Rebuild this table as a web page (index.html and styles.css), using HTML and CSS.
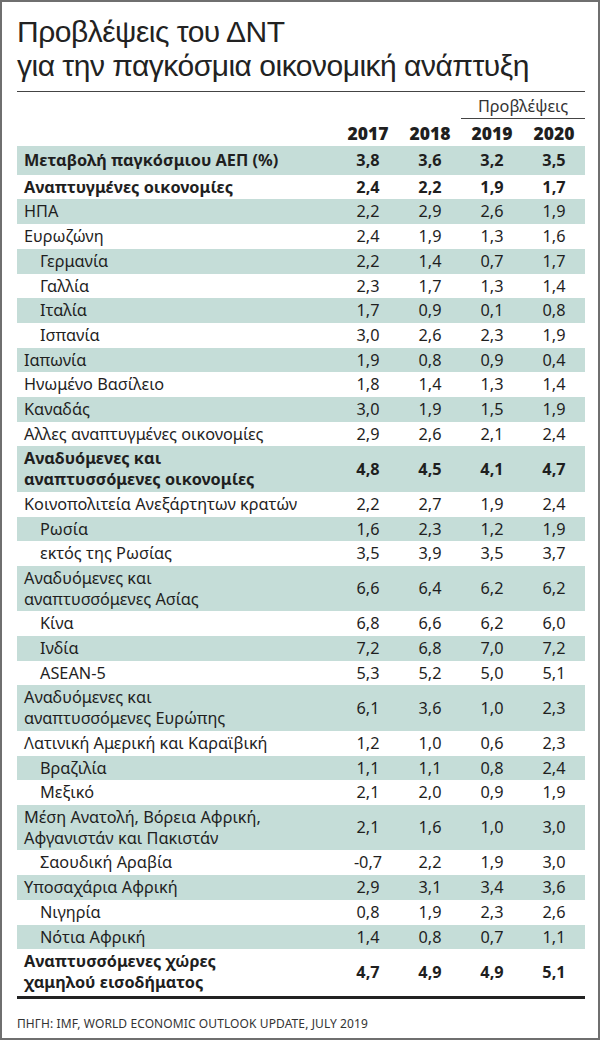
FILE: index.html
```html
<!DOCTYPE html>
<html lang="el">
<head>
    <meta charset="UTF-8">
    <title>Προβλέψεις του ΔΝΤ</title>
    <link rel="stylesheet" href="styles.css">
</head>
<body>
    <div class="frame">
        <h1 class="title">Προβλέψεις του ΔΝΤ<br>για την παγκόσμια οικονομική ανάπτυξη</h1>
        <table class="data">
            <thead>
                <tr class="forecast">
                    <th colspan="3"></th>
                    <th colspan="2" class="forecast-label">Προβλέψεις</th>
                </tr>
                <tr class="years">
                    <th></th>
                    <th>2017</th>
                    <th>2018</th>
                    <th>2019</th>
                    <th>2020</th>
                </tr>
            </thead>
            <tbody>
                <tr class="shade bold first"><td>Μεταβολή παγκόσμιου ΑΕΠ (%)</td><td>3,8</td><td>3,6</td><td>3,2</td><td>3,5</td></tr>
                <tr class="bold"><td>Αναπτυγμένες οικονομίες</td><td>2,4</td><td>2,2</td><td>1,9</td><td>1,7</td></tr>
                <tr class="shade"><td>ΗΠΑ</td><td>2,2</td><td>2,9</td><td>2,6</td><td>1,9</td></tr>
                <tr><td>Ευρωζώνη</td><td>2,4</td><td>1,9</td><td>1,3</td><td>1,6</td></tr>
                <tr class="shade sub"><td>Γερμανία</td><td>2,2</td><td>1,4</td><td>0,7</td><td>1,7</td></tr>
                <tr class="sub"><td>Γαλλία</td><td>2,3</td><td>1,7</td><td>1,3</td><td>1,4</td></tr>
                <tr class="shade sub"><td>Ιταλία</td><td>1,7</td><td>0,9</td><td>0,1</td><td>0,8</td></tr>
                <tr class="sub"><td>Ισπανία</td><td>3,0</td><td>2,6</td><td>2,3</td><td>1,9</td></tr>
                <tr class="shade"><td>Ιαπωνία</td><td>1,9</td><td>0,8</td><td>0,9</td><td>0,4</td></tr>
                <tr><td>Ηνωμένο Βασίλειο</td><td>1,8</td><td>1,4</td><td>1,3</td><td>1,4</td></tr>
                <tr class="shade"><td>Καναδάς</td><td>3,0</td><td>1,9</td><td>1,5</td><td>1,9</td></tr>
                <tr><td>Αλλες αναπτυγμένες οικονομίες</td><td>2,9</td><td>2,6</td><td>2,1</td><td>2,4</td></tr>
                <tr class="shade bold"><td>Αναδυόμενες και<br>αναπτυσσόμενες οικονομίες</td><td>4,8</td><td>4,5</td><td>4,1</td><td>4,7</td></tr>
                <tr><td>Κοινοπολιτεία Ανεξάρτητων κρατών</td><td>2,2</td><td>2,7</td><td>1,9</td><td>2,4</td></tr>
                <tr class="shade sub"><td>Ρωσία</td><td>1,6</td><td>2,3</td><td>1,2</td><td>1,9</td></tr>
                <tr class="sub"><td>εκτός της Ρωσίας</td><td>3,5</td><td>3,9</td><td>3,5</td><td>3,7</td></tr>
                <tr class="shade"><td>Αναδυόμενες και<br>αναπτυσσόμενες Ασίας</td><td>6,6</td><td>6,4</td><td>6,2</td><td>6,2</td></tr>
                <tr class="sub"><td>Κίνα</td><td>6,8</td><td>6,6</td><td>6,2</td><td>6,0</td></tr>
                <tr class="shade sub"><td>Ινδία</td><td>7,2</td><td>6,8</td><td>7,0</td><td>7,2</td></tr>
                <tr class="sub"><td>ASEAN-5</td><td>5,3</td><td>5,2</td><td>5,0</td><td>5,1</td></tr>
                <tr class="shade"><td>Αναδυόμενες και<br>αναπτυσσόμενες Ευρώπης</td><td>6,1</td><td>3,6</td><td>1,0</td><td>2,3</td></tr>
                <tr><td>Λατινική Αμερική και Καραϊβική</td><td>1,2</td><td>1,0</td><td>0,6</td><td>2,3</td></tr>
                <tr class="shade sub"><td>Βραζιλία</td><td>1,1</td><td>1,1</td><td>0,8</td><td>2,4</td></tr>
                <tr class="sub"><td>Μεξικό</td><td>2,1</td><td>2,0</td><td>0,9</td><td>1,9</td></tr>
                <tr class="shade"><td>Μέση Ανατολή, Βόρεια Αφρική,<br>Αφγανιστάν και Πακιστάν</td><td>2,1</td><td>1,6</td><td>1,0</td><td>3,0</td></tr>
                <tr class="sub"><td>Σαουδική Αραβία</td><td>-0,7</td><td>2,2</td><td>1,9</td><td>3,0</td></tr>
                <tr class="shade"><td>Υποσαχάρια Αφρική</td><td>2,9</td><td>3,1</td><td>3,4</td><td>3,6</td></tr>
                <tr class="sub"><td>Νιγηρία</td><td>0,8</td><td>1,9</td><td>2,3</td><td>2,6</td></tr>
                <tr class="shade sub"><td>Νότια Αφρική</td><td>1,4</td><td>0,8</td><td>0,7</td><td>1,1</td></tr>
                <tr class="bold last"><td>Αναπτυσσόμενες χώρες<br>χαμηλού εισοδήματος</td><td>4,7</td><td>4,9</td><td>4,9</td><td>5,1</td></tr>
            </tbody>
        </table>
        <div class="source">ΠΗΓΗ: IMF, WORLD ECONOMIC OUTLOOK UPDATE, JULY 2019</div>
    </div>
</body>
</html>
```

FILE: styles.css
```css
:root {
    --shade: #c5ddd8;
    --ink: #1f1f1f;
    --frame: #6f6f6f;
}

body {
    margin: 0;
    font-family: "Noto Sans", "Open Sans", sans-serif;
    color: var(--ink);
    background: #fff;
}

.frame {
    width: 600px;
    height: 1040px;
    box-sizing: border-box;
    border: 2px solid var(--frame);
    padding: 13px 13px 0 15px;
}

.title {
    font-family: "Liberation Sans Narrow", "Liberation Sans", sans-serif;
    font-weight: normal;
    font-size: 30px;
    letter-spacing: -0.5px;
    line-height: 34px;
    margin: 0;
    padding-bottom: 8px;
    border-bottom: 1px solid #444;
    color: #222;
}

.data {
    width: 100%;
    border-collapse: collapse;
    font-size: 16.3px;
}

.data th,
.data td {
    padding: 2px 0;
    line-height: 20.7px;
}

.data td:first-child {
    padding-left: 7px;
    text-align: left;
}

.data td + td,
.data th + th {
    width: 62px;
    text-align: center;
}

.forecast th {
    height: 23px;
    padding: 3px 0 0;
    font-weight: normal;
    vertical-align: middle;
}

.forecast-label {
    border-bottom: 1px solid #444;
    color: #333;
}

.years th {
    height: 23px;
    padding: 3px 0 1px;
    font-size: 17.5px;
    font-weight: 900;
}

.shade td {
    background: var(--shade);
}

.bold td {
    font-weight: bold;
}

.sub td:first-child {
    padding-left: 23px;
}

.first td {
    padding: 4px 0 4px;
}

.first td:first-child {
    padding-left: 7px;
}

.last td {
    padding-bottom: 3px;
    border-bottom: 3px solid #222;
}

.source {
    margin-top: 16px;
    font-size: 12px;
    letter-spacing: 0.1px;
    color: #333;
}
```
